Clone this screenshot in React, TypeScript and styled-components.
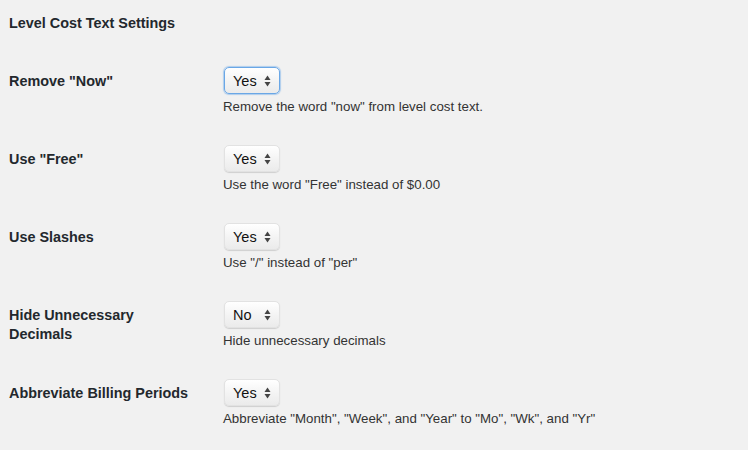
import React from 'react';
import styled, {createGlobalStyle} from 'styled-components';

const GlobalStyle = createGlobalStyle`
  html, body {
    margin: 0;
    padding: 0;
    background: #f1f1f1;
  }
  body {
    font-family: "Liberation Sans", Arial, Helvetica, sans-serif;
    color: #23282d;
  }
`

const Page = styled.div`
  padding: 0 0 0 9px;
  width: 748px;
  height: 450px;
  box-sizing: border-box;
`

const Heading = styled.h3`
  margin: 0;
  padding-top: 14px;
  font-size: 14.4px;
  line-height: 18px;
  font-weight: 700;
  color: #23282d;
`

const FormTable = styled.div`
  display: flex;
  flex-direction: column;
  margin-top: 20px;
`

const Row = styled.div`
  display: grid;
  grid-template-columns: 205px 1fr;
  height: 78px;
`

const Label = styled.div`
  padding-top: 20px;
  font-size: 14.4px;
  line-height: 19px;
  font-weight: 700;
  color: #23282d;
`

const Field = styled.div`
  padding: 15px 0 0 9px;
  display: flex;
  flex-direction: column;
  align-items: flex-start;
`

const SelectWrap = styled.div`
  position: relative;
  width: 56px;
  height: 27px;
  margin-left: 1px;
`

const Select = styled.select<{ $focused?: boolean }>`
  appearance: none;
  -webkit-appearance: none;
  width: 100%;
  height: 100%;
  box-sizing: border-box;
  margin: 0;
  padding: 0 0 0 8px;
  font-family: "Liberation Sans", Arial, Helvetica, sans-serif;
  font-size: 14.5px;
  color: #111;
  border-radius: 5px;
  background: linear-gradient(#ffffff, #f3f3f3 55%, #ebebeb);
  border: 1px solid ${({$focused}) => $focused ? '#6aa7e6' : '#e2e2e2'};
  box-shadow: ${({$focused}) => $focused
    ? '0 0 1px 1px rgba(90, 160, 230, 0.45)'
    : '0 1px 1px rgba(0, 0, 0, 0.14)'};
  outline: none;
`

const Arrows = styled.svg`
  position: absolute;
  right: 9px;
  top: 8px;
  pointer-events: none;
`

const Description = styled.p`
  margin: 4px 0 0;
  font-size: 13.3px;
  line-height: 18px;
  color: #333;
`

type Setting = {
  label: React.ReactNode;
  value: string;
  description: string;
  focused?: boolean;
};

const settings: Setting[] = [
  {label: 'Remove "Now"', value: 'Yes', description: 'Remove the word "now" from level cost text.', focused: true},
  {label: 'Use "Free"', value: 'Yes', description: 'Use the word "Free" instead of $0.00'},
  {label: 'Use Slashes', value: 'Yes', description: 'Use "/" instead of "per"'},
  {label: <>Hide Unnecessary<br/>Decimals</>, value: 'No', description: 'Hide unnecessary decimals'},
  {label: 'Abbreviate Billing Periods', value: 'Yes', description: 'Abbreviate "Month", "Week", and "Year" to "Mo", "Wk", and "Yr"'},
];

const SettingRow = ({label, value, description, focused}: Setting) => (
  <Row>
    <Label>{label}</Label>
    <Field>
      <SelectWrap>
        <Select $focused={focused} defaultValue={value}>
          <option value="Yes">Yes</option>
          <option value="No">No</option>
        </Select>
        <Arrows width="7" height="12" viewBox="0 0 7 12">
          <path d="M3.5 0.5 L6.5 5 L0.5 5 Z" fill="#444"/>
          <path d="M3.5 11.5 L6.5 7 L0.5 7 Z" fill="#444"/>
        </Arrows>
      </SelectWrap>
      <Description>{description}</Description>
    </Field>
  </Row>
);

export default function App() {
  return <>
    <GlobalStyle/>
    <Page>
      <Heading>Level Cost Text Settings</Heading>
      <FormTable>
        {settings.map((s, i) => <SettingRow key={i} {...s}/>)}
      </FormTable>
    </Page>
  </>
}
